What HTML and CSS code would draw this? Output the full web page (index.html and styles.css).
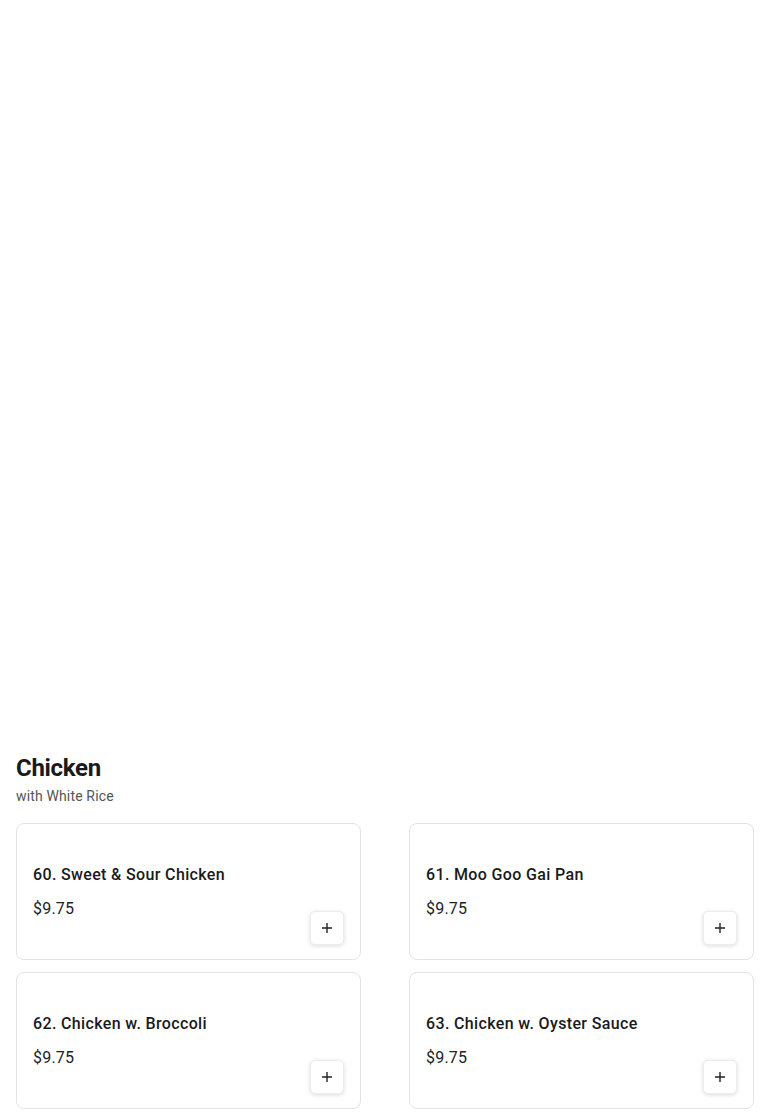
FILE: index.html
```html
<!DOCTYPE html>
<html lang="en">
<head>
  <meta charset="UTF-8">
  <title>Chicken | Menu</title>
  <meta name="viewport" content="width=device-width, initial-scale=1.0">
  <link rel="stylesheet" href="styles.css">
</head>
<body>
  <div class="hero"></div>

  <section class="category">
    <h2>Chicken</h2>
    <div class="subtitle">with White Rice</div>

    <div class="items">
      <div class="item">
        <div class="item-name">60. Sweet &amp; Sour Chicken</div>
        <div class="item-price">$9.75</div>
        <button class="add" aria-label="Add">
          <svg width="12" height="12" viewBox="0 0 12 12"><path d="M6 1v10M1 6h10" stroke="#222" stroke-width="1.4"/></svg>
        </button>
      </div>
      <div class="item">
        <div class="item-name">61. Moo Goo Gai Pan</div>
        <div class="item-price">$9.75</div>
        <button class="add" aria-label="Add">
          <svg width="12" height="12" viewBox="0 0 12 12"><path d="M6 1v10M1 6h10" stroke="#222" stroke-width="1.4"/></svg>
        </button>
      </div>
      <div class="item">
        <div class="item-name">62. Chicken w. Broccoli</div>
        <div class="item-price">$9.75</div>
        <button class="add" aria-label="Add">
          <svg width="12" height="12" viewBox="0 0 12 12"><path d="M6 1v10M1 6h10" stroke="#222" stroke-width="1.4"/></svg>
        </button>
      </div>
      <div class="item">
        <div class="item-name">63. Chicken w. Oyster Sauce</div>
        <div class="item-price">$9.75</div>
        <button class="add" aria-label="Add">
          <svg width="12" height="12" viewBox="0 0 12 12"><path d="M6 1v10M1 6h10" stroke="#222" stroke-width="1.4"/></svg>
        </button>
      </div>
    </div>
  </section>
</body>
</html>
```

FILE: styles.css
```css
* {
  box-sizing: border-box;
}

body {
  font-family: Roboto, "Liberation Sans", sans-serif;
  background: #fff;
  color: #1a1a1a;
  margin: 0;
}

.hero {
  height: 752px;
}

.category {
  padding: 0 16px;
}

.category h2 {
  margin: 0;
  font-size: 24px;
  line-height: 32px;
  font-weight: 700;
  letter-spacing: -0.3px;
  color: #1a1a1a;
}

.subtitle {
  margin-top: 2px;
  font-size: 14px;
  line-height: 20px;
  letter-spacing: 0.15px;
  color: #555;
}

.items {
  margin-top: 17px;
  display: grid;
  grid-template-columns: 1fr 1fr;
  column-gap: 48px;
  row-gap: 12px;
}

.item {
  position: relative;
  min-height: 137px;
  padding: 16px;
  border: 1px solid #e3e3e3;
  border-radius: 8px;
  display: flex;
  flex-direction: column;
  justify-content: center;
  gap: 10px;
}

.item-name {
  font-size: 16px;
  line-height: 24px;
  font-weight: 500;
  letter-spacing: 0.35px;
  color: #1a1a1a;
}

.item-price {
  font-size: 16px;
  line-height: 24px;
  letter-spacing: 0.2px;
  color: #222;
}

.add {
  position: absolute;
  right: 16px;
  bottom: 14px;
  width: 34px;
  height: 34px;
  padding: 0;
  border: 1px solid #ececec;
  border-radius: 5px;
  background: #fff;
  box-shadow: 0 1px 4px rgba(0, 0, 0, 0.14);
  display: flex;
  align-items: center;
  justify-content: center;
  cursor: pointer;
}
```
